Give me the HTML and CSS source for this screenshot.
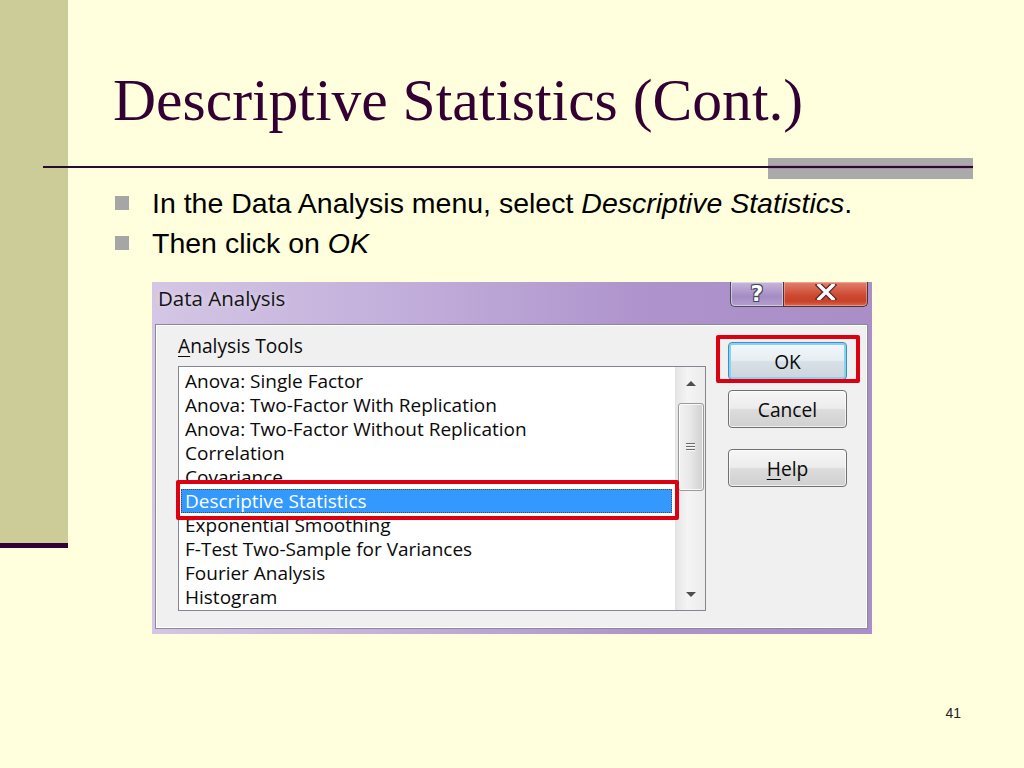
FILE: index.html
```html
<!DOCTYPE html>
<html lang="en">
<head>
<meta charset="utf-8">
<title>Descriptive Statistics (Cont.)</title>
<link rel="stylesheet" href="styles.css">
</head>
<body>
<div class="slide">
  <aside class="sidebar"></aside>
  <main class="main">
    <h1 class="title">Descriptive Statistics (Cont.)</h1>
    <div class="rule"></div>
    <ul class="bullets">
      <li><span>In the Data Analysis menu, select <em>Descriptive Statistics</em>.</span></li>
      <li><span>Then click on <em>OK</em></span></li>
    </ul>
    <div class="dialog">
      <div class="dlg-titlebar">
        <span class="dlg-title">Data Analysis</span>
        <div class="caption-btns">
          <span class="cap-help">?</span>
          <span class="cap-close">
            <svg width="22" height="16" viewBox="0 0 22 16">
              <path d="M4 1 L18 15 M18 1 L4 15" stroke="#5a2a2a" stroke-width="6" stroke-linecap="square" fill="none"/>
              <path d="M4 1 L18 15 M18 1 L4 15" stroke="#ffffff" stroke-width="3.4" stroke-linecap="square" fill="none"/>
            </svg>
          </span>
        </div>
      </div>
      <div class="dlg-panel">
        <div class="tools">
          <div class="tools-label"><u>A</u>nalysis Tools</div>
          <div class="listbox">
            <ul class="items">
              <li>Anova: Single Factor</li>
              <li>Anova: Two-Factor With Replication</li>
              <li>Anova: Two-Factor Without Replication</li>
              <li>Correlation</li>
              <li>Covariance</li>
              <li class="selected">Descriptive Statistics<span class="mark mark-row"></span></li>
              <li>Exponential Smoothing</li>
              <li>F-Test Two-Sample for Variances</li>
              <li>Fourier Analysis</li>
              <li>Histogram</li>
            </ul>
            <div class="vscroll">
              <div class="sb-btn"><span class="arrow-up"></span></div>
              <div class="thumb"><span class="grip"></span></div>
              <div class="sb-space"></div>
              <div class="sb-btn"><span class="arrow-down"></span></div>
            </div>
          </div>
        </div>
        <div class="buttons">
          <div class="btn btn-default">OK<span class="mark mark-ok"></span></div>
          <div class="btn btn-cancel">Cancel</div>
          <div class="btn btn-help"><u>H</u>elp</div>
        </div>
      </div>
    </div>
    <div class="page-num">41</div>
  </main>
</div>
</body>
</html>
```

FILE: styles.css
```css
* { box-sizing: border-box; margin: 0; padding: 0; }

body {
  margin: 0;
  background: #ffffdd;
}

.slide {
  width: 1024px;
  height: 768px;
  display: flex;
  align-items: flex-start;
  background: #ffffdd;
  overflow: hidden;
}

.sidebar {
  flex: 0 0 68px;
  height: 548px;
  background: #cccc99;
  border-bottom: 5px solid #330033;
}

.main {
  flex: 1;
  margin-left: -25px;
  padding-top: 60px;
  display: flex;
  flex-direction: column;
  align-items: flex-start;
}

.title {
  font-family: "Liberation Serif", "Times New Roman", serif;
  font-weight: normal;
  font-size: 59.6px;
  line-height: 80px;
  color: #330033;
  padding-left: 70px;
  white-space: nowrap;
}

.rule {
  margin-top: 18px;
  width: 930px;
  height: 21px;
  background:
    linear-gradient(#2a0a2e, #2a0a2e) 0 8px / 100% 2px no-repeat,
    linear-gradient(#a890a8, #a890a8) right 7px / 205px 4px no-repeat,
    linear-gradient(#aaaaaa, #aaaaaa) right top / 205px 21px no-repeat;
}

.bullets {
  list-style: none;
  margin-top: 4px;
  font-family: "Liberation Sans", Arial, sans-serif;
  font-size: 28.5px;
  line-height: 40px;
  color: #000000;
}

.bullets li {
  display: flex;
  align-items: center;
  gap: 23px;
  padding-left: 72px;
}

.bullets li::before {
  content: "";
  flex: none;
  width: 14px;
  height: 14px;
  background: #a6a6a6;
}

/* ---------- Dialog ---------- */

.dialog {
  margin: 19px 0 0 109px;
  width: 720px;
  height: 352px;
  display: flex;
  flex-direction: column;
  padding: 0 4px 5px 3px;
  background: linear-gradient(90deg, #d4c6e4 0%, #c2aedb 35%, #ad92cb 70%, #a98ec8 100%);
  font-family: "Open Sans", "Noto Sans", sans-serif;
  color: #0a0a0a;
}

.dlg-titlebar {
  height: 42px;
  flex: none;
  display: flex;
  justify-content: space-between;
  align-items: flex-start;
}

.dlg-title {
  margin: 4px 0 0 3px;
  font-size: 20.5px;
  line-height: 24px;
  color: #141414;
  text-shadow: 0 0 6px rgba(255, 255, 255, 0.6);
}

.caption-btns {
  display: flex;
  height: 25px;
}

.cap-help {
  width: 53px;
  height: 25px;
  border: 1px solid #4d4a58;
  border-top: none;
  border-right: none;
  border-radius: 0 0 0 5px;
  background: linear-gradient(#c6b6dc, #a48cc4 60%, #b29ed0);
  box-shadow: inset 0 0 0 1px rgba(255, 255, 255, 0.45);
  display: flex;
  justify-content: center;
  align-items: flex-end;
  font-family: "DejaVu Sans", sans-serif;
  font-weight: bold;
  font-size: 22px;
  line-height: 24px;
  color: #ffffff;
  text-shadow: 0 0 1px #3a3a4a, 1px 1px 0 #4a4a5a, -1px -1px 0 #4a4a5a, 1px -1px 0 #4a4a5a, -1px 1px 0 #4a4a5a;
  overflow: hidden;
}

.cap-close {
  width: 85px;
  height: 25px;
  border: 1px solid #4d3232;
  border-top: none;
  border-radius: 0 0 5px 0;
  background: linear-gradient(#e4806c, #cc4a32 55%, #c84028 80%, #d86a52);
  box-shadow: inset 0 0 0 1px rgba(255, 220, 210, 0.4);
  display: flex;
  justify-content: center;
  align-items: flex-start;
  padding-top: 2px;
}

.dlg-panel {
  flex: 1;
  display: flex;
  gap: 22px;
  padding: 8px 20px 0 22px;
  background: #f0f0f0;
  border: 1px solid #8d8a98;
  box-shadow: inset 0 0 0 1px #ffffff;
}

.tools {
  display: flex;
  flex-direction: column;
}

.tools-label {
  font-size: 19.2px;
  line-height: 24px;
  height: 24px;
  margin-top: 1px;
  margin-bottom: 8px;
}

.tools-label u,
.btn-help u {
  text-decoration-thickness: 1px;
  text-underline-offset: 3px;
}

.listbox {
  width: 528px;
  height: 245px;
  display: flex;
  border: 1px solid #828790;
  background: #ffffff;
}

.items {
  flex: 1;
  list-style: none;
  padding: 2px 3px 0 2px;
  font-size: 19px;
}

.items li {
  height: 24px;
  line-height: 24px;
  padding-left: 4px;
  white-space: nowrap;
}

.items li.selected {
  position: relative;
  background: #3399ff;
  color: #ffffff;
  outline: 1px dotted #4a4a4a;
  outline-offset: -1px;
}

.mark {
  position: absolute;
  border: 4px solid #dd0010;
  border-radius: 2px;
  pointer-events: none;
}

.mark-row {
  top: -9px;
  bottom: -7px;
  left: -5px;
  right: -7px;
}

.vscroll {
  width: 30px;
  flex: none;
  display: flex;
  flex-direction: column;
  align-items: center;
  background: linear-gradient(90deg, #e6e6e6, #f4f4f4 40%, #ececec);
  border-left: 1px solid #e2e2e2;
}

.sb-btn {
  height: 34px;
  width: 100%;
  display: flex;
  justify-content: center;
  align-items: center;
}

.arrow-up {
  width: 0;
  height: 0;
  border-left: 5px solid transparent;
  border-right: 5px solid transparent;
  border-bottom: 5px solid #4e4e4e;
  margin-top: -2px;
}

.arrow-down {
  width: 0;
  height: 0;
  border-left: 5px solid transparent;
  border-right: 5px solid transparent;
  border-top: 5px solid #4e4e4e;
  margin-top: 2px;
}

.thumb {
  margin-top: 2px;
  width: 26px;
  height: 88px;
  border: 1px solid #9a9a9a;
  border-radius: 3px;
  background: linear-gradient(90deg, #f2f2f2, #e8e8e8 45%, #d0d0d0);
  box-shadow: inset 0 0 0 1px rgba(255, 255, 255, 0.8);
  display: flex;
  justify-content: center;
  align-items: center;
}

.grip {
  width: 9px;
  height: 9px;
  background: repeating-linear-gradient(#6b6b6b 0, #6b6b6b 1px, #f6f6f6 1px, #f6f6f6 2px, #e8e8e8 2px, #e8e8e8 3px);
}

.sb-space {
  flex: 1;
}

.buttons {
  display: flex;
  flex-direction: column;
  padding-top: 9px;
}

.btn {
  position: relative;
  width: 119px;
  height: 38px;
  border: 1px solid #707070;
  border-radius: 4px;
  background: linear-gradient(#f6f6f6 0%, #ececec 48%, #dcdcdc 52%, #d0d0d0 100%);
  box-shadow: inset 0 0 0 1px rgba(255, 255, 255, 0.7);
  display: flex;
  justify-content: center;
  align-items: center;
  font-size: 19.2px;
}

.btn-default {
  border-color: #3d8cc4;
  box-shadow: inset 0 0 0 2px #86d2f2;
  background: linear-gradient(#f2f8fc 0%, #e6eef2 48%, #d6e0e6 52%, #cdd6dc 100%);
}

.btn-cancel {
  margin-top: 10px;
}

.btn-help {
  margin-top: 21px;
}

.mark-ok {
  top: -8px;
  bottom: -4px;
  left: -13px;
  right: -14px;
}

.page-num {
  align-self: stretch;
  margin-top: 71px;
  padding-right: 63px;
  text-align: right;
  font-family: "Liberation Sans", Arial, sans-serif;
  font-size: 14px;
  line-height: 16px;
  color: #222222;
}
```
